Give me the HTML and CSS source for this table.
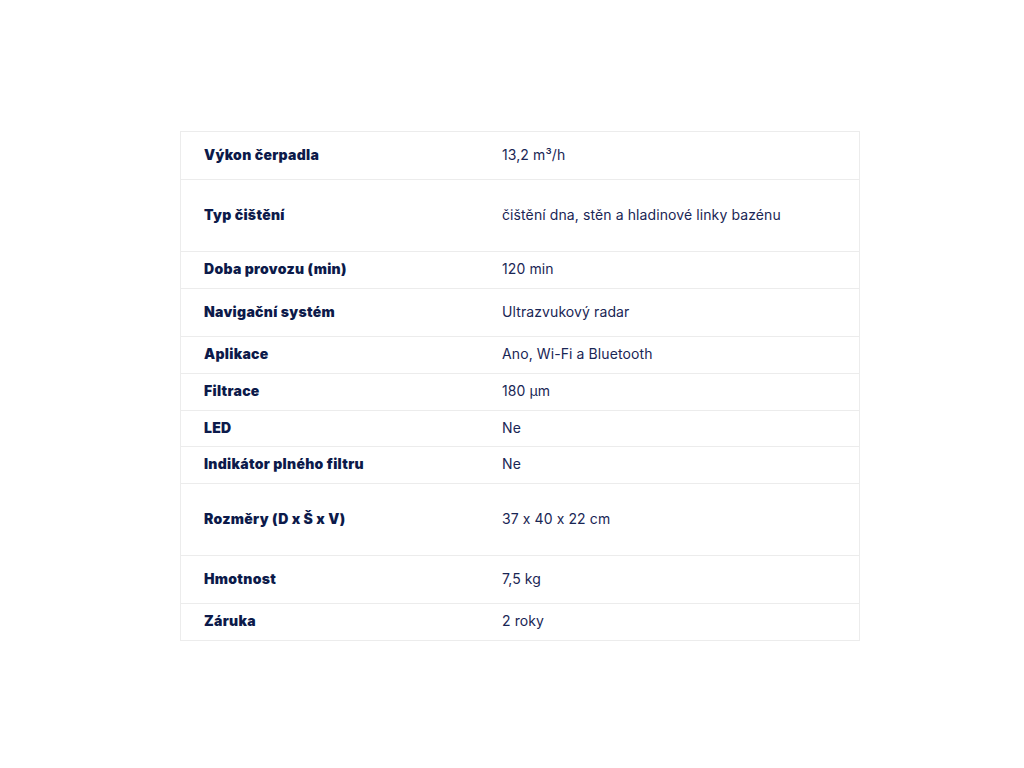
FILE: index.html
```html
<!DOCTYPE html>
<html lang="cs">
<head>
<meta charset="utf-8">
<link rel="stylesheet" href="styles.css">
</head>
<body>
<main class="page">
  <table class="specs">
    <tbody>
      <tr class="row-m"><th>Výkon čerpadla</th><td>13,2 m³/h</td></tr>
      <tr class="row-l"><th>Typ čištění</th><td>čištění dna, stěn a hladinové linky bazénu</td></tr>
      <tr class="row-s"><th>Doba provozu (min)</th><td>120 min</td></tr>
      <tr class="row-m"><th>Navigační systém</th><td>Ultrazvukový radar</td></tr>
      <tr class="row-s"><th>Aplikace</th><td>Ano, Wi-Fi a Bluetooth</td></tr>
      <tr class="row-s"><th>Filtrace</th><td>180 µm</td></tr>
      <tr class="row-xs"><th>LED</th><td>Ne</td></tr>
      <tr class="row-s"><th>Indikátor plného filtru</th><td>Ne</td></tr>
      <tr class="row-l"><th>Rozměry (D x Š x V)</th><td>37 x 40 x 22 cm</td></tr>
      <tr class="row-m"><th>Hmotnost</th><td>7,5 kg</td></tr>
      <tr class="row-s"><th>Záruka</th><td>2 roky</td></tr>
    </tbody>
  </table>
</main>
</body>
</html>
```

FILE: styles.css
```css
html, body {
  margin: 0;
  padding: 0;
  background: #ffffff;
}
.page {
  padding: 131px 0 0 180px;
}
.specs {
  width: 680px;
  border-collapse: collapse;
  border: 1px solid #ececec;
  font-family: Inter, "Liberation Sans", sans-serif;
  font-feature-settings: "calt" 0;
  font-size: 14px;
  color: #1a2655;
}
.specs tr {
  border-bottom: 1px solid #ececec;
}
.specs th,
.specs td {
  padding-top: 0;
  padding-bottom: 3px;
}
.specs th {
  width: 275px;
  text-align: left;
  padding-left: 23px;
  font-weight: 900;
  color: #0c1a4a;
  letter-spacing: 0.3px;
}
.specs td {
  padding-left: 22px;
  padding-right: 24px;
  font-weight: 400;
  letter-spacing: 0.1px;
}
.row-xs { height: 36px; }
.row-s { height: 37px; }
.row-m { height: 48px; }
.row-l { height: 72px; }
```
